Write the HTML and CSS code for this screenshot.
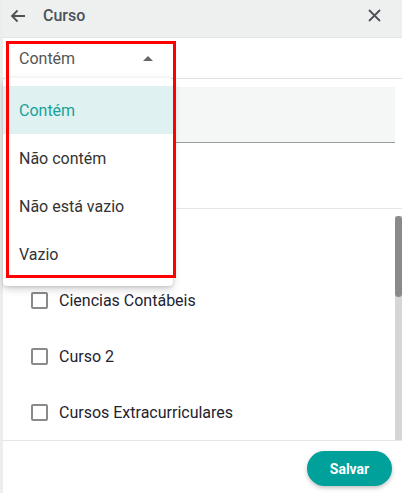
FILE: index.html
```html
<!DOCTYPE html>
<html lang="pt-BR">
<head>
    <meta charset="UTF-8">
    <meta name="viewport" content="width=device-width, initial-scale=1.0">
    <title>Filtro - Curso</title>
    <link rel="stylesheet" href="styles.css">
</head>
<body>
    <div class="dialog">
        <header class="dialog-header">
            <button class="icon-btn" aria-label="Voltar">
                <svg width="16" height="14" viewBox="0 0 16 14"><path d="M15 7H2M7.5 1.5L2 7l5.5 5.5" fill="none" stroke="#4c5258" stroke-width="1.8"/></svg>
            </button>
            <span class="dialog-title">Curso</span>
            <button class="icon-btn close-btn" aria-label="Fechar">
                <svg width="13" height="13" viewBox="0 0 13 13"><path d="M1 1l11 11M12 1L1 12" fill="none" stroke="#4c5258" stroke-width="1.8"/></svg>
            </button>
        </header>

        <div class="filter">
            <div class="filter-row">
                <div class="select">
                    <span>Contém</span>
                    <span class="select-arrow"></span>
                </div>
            </div>
            <div class="filter-input">
                <div class="text-field"></div>
            </div>

            <!-- open dropdown -->
            <ul class="menu">
                <li class="menu-item active">Contém</li>
                <li class="menu-item">Não contém</li>
                <li class="menu-item">Não está vazio</li>
                <li class="menu-item">Vazio</li>
            </ul>
            <div class="highlight-box"></div>
        </div>

        <div class="list-wrap">
            <ul class="options">
                <li class="option"><span class="checkbox"></span>Administração</li>
                <li class="option"><span class="checkbox"></span>Ciencias Contábeis</li>
                <li class="option"><span class="checkbox"></span>Curso 2</li>
                <li class="option"><span class="checkbox"></span>Cursos Extracurriculares</li>
            </ul>
            <div class="scrollbar"><div class="scrollbar-thumb"></div></div>
        </div>

        <footer class="dialog-footer">
            <button class="save-btn">Salvar</button>
        </footer>
    </div>
</body>
</html>
```

FILE: styles.css
```css
/* Reset styles */
* {
    margin: 0;
    padding: 0;
    box-sizing: border-box;
}

body {
    font-family: Roboto, "Liberation Sans", Arial, sans-serif;
    background-color: #eceeee;
    width: 402px;
    height: 493px;
    overflow: hidden;
}

.dialog {
    margin-left: 3px;
    height: 493px;
    background-color: #fff;
    display: flex;
    flex-direction: column;
}

/* Header */
.dialog-header {
    height: 38px;
    background-color: #eef0f0;
    border-bottom: 1px solid #e3e5e5;
    display: flex;
    align-items: center;
    padding: 0 0 6px 6px;
}

.icon-btn {
    background: none;
    border: none;
    display: flex;
    align-items: center;
    justify-content: center;
    width: 18px;
    height: 18px;
}

.dialog-title {
    margin-left: 16px;
    font-size: 16px;
    font-weight: 500;
    color: #4c5258;
}

.close-btn {
    margin-left: auto;
    margin-right: 19px;
}

/* Filter */
.filter {
    position: relative;
    height: 171px;
    border-bottom: 1px solid #e6e6e6;
}

.filter-row {
    height: 41px;
    border-bottom: 1px solid #e2e2e2;
}

.select {
    width: 170px;
    height: 40px;
    display: flex;
    align-items: center;
    justify-content: space-between;
    padding: 0 20px 0 16px;
    font-size: 16px;
    color: #555;
}

.select-arrow {
    width: 0;
    height: 0;
    border-left: 5px solid transparent;
    border-right: 5px solid transparent;
    border-bottom: 5px solid #666;
}

.filter-input {
    padding: 8px 7px 0 8px;
}

.text-field {
    height: 56px;
    background-color: #f5f7f7;
    border-bottom: 1px solid #9a9a9a;
}

.menu {
    position: absolute;
    top: 40px;
    left: 0;
    width: 170px;
    padding: 8px 0;
    list-style: none;
    background-color: #fff;
    border-radius: 4px;
    box-shadow: 0 3px 8px rgba(0, 0, 0, 0.18), 0 1px 3px rgba(0, 0, 0, 0.12);
    z-index: 2;
}

.menu-item {
    height: 48px;
    display: flex;
    align-items: center;
    padding-left: 16px;
    font-size: 16px;
    color: #333;
}

.menu-item.active {
    background-color: #dff1f0;
    color: #17a29c;
}

.highlight-box {
    position: absolute;
    top: 3px;
    left: 3px;
    width: 170px;
    height: 237px;
    border: 3px solid #ff0000;
    pointer-events: none;
    z-index: 3;
}

/* Options list */
.list-wrap {
    display: flex;
    margin-top: 7px;
    height: 225px;
    border-bottom: 1px solid #e6e6e6;
}

.options {
    flex: 1;
    list-style: none;
    overflow: hidden;
}

.scrollbar {
    width: 7px;
    background-color: #d6d6d6;
}

.scrollbar-thumb {
    height: 81px;
    background-color: #8a8a8a;
    border-radius: 4px;
}

.option {
    height: 56px;
    display: flex;
    align-items: center;
    padding-left: 28px;
    font-size: 16px;
    color: #1f2330;
}

.checkbox {
    width: 17px;
    height: 17px;
    border: 2px solid #8a8a8a;
    border-radius: 2px;
    margin-right: 11px;
}

/* Footer */
.dialog-footer {
    flex: 1;
    display: flex;
    justify-content: flex-end;
    align-items: flex-start;
    padding: 10px 10px 0 0;
}

.save-btn {
    width: 85px;
    height: 35px;
    border: none;
    border-radius: 18px;
    background-color: #00a19b;
    color: #fff;
    font-family: Roboto, "Liberation Sans", Arial, sans-serif;
    font-size: 14px;
    font-weight: 700;
    box-shadow: 0 2px 4px rgba(0, 0, 0, 0.25);
}
```
